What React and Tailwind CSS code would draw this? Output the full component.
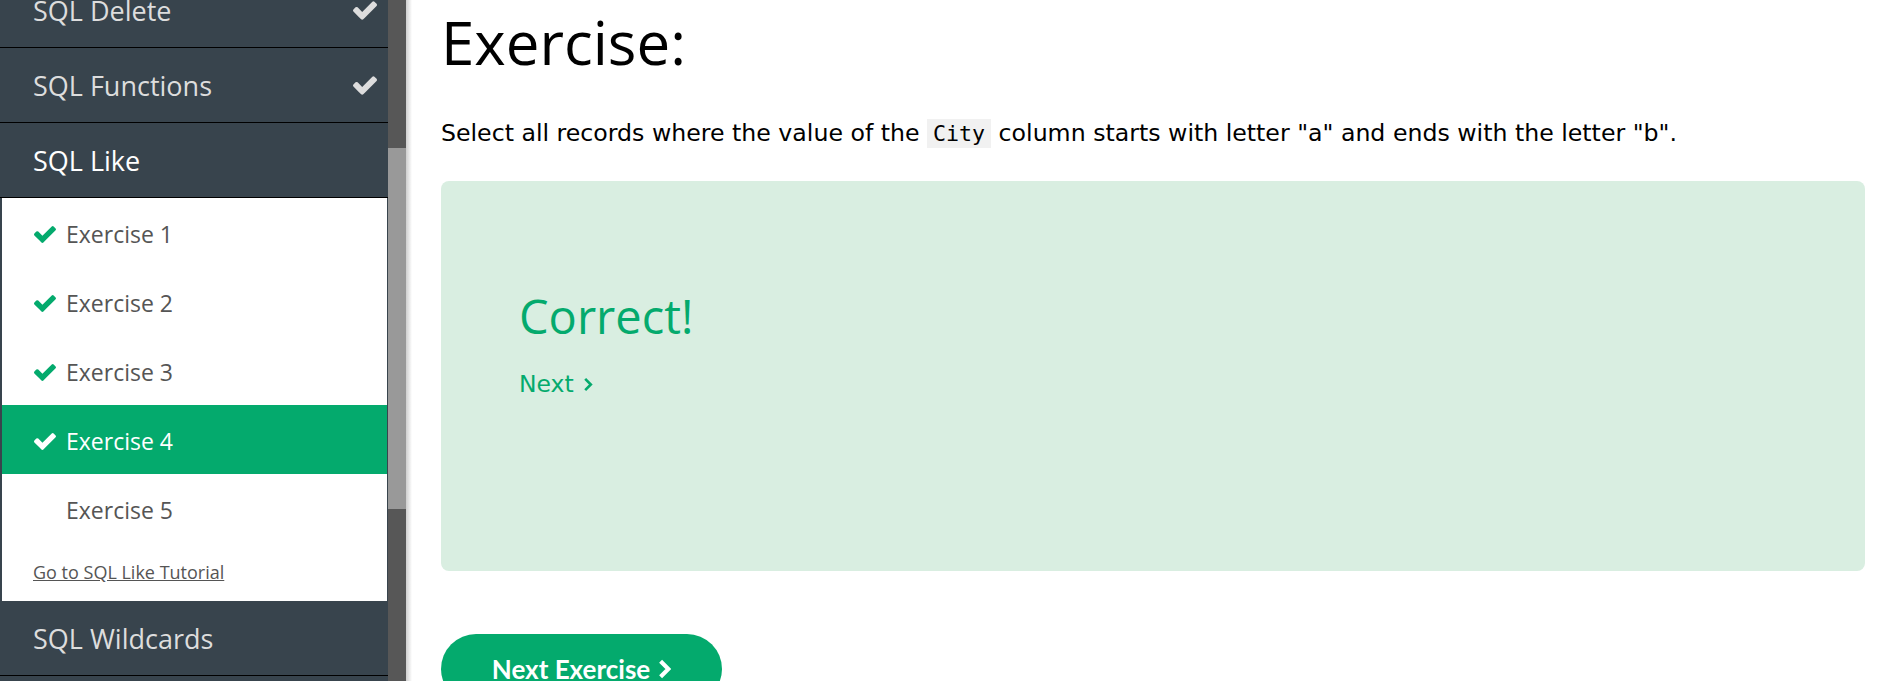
import React from "react";

const CHECK_PATH =
  "M1671 566q0 40-28 68l-724 724-136 136q-28 28-68 28t-68-28l-136-136-362-362q-28-28-28-68t28-68l136-136q28-28 68-28t68 28l294 295 656-657q28-28 68-28t68 28l136 136q28 28 28 68z";

const Check = ({ className }) => (
  <svg viewBox="121 334 1550 1188" className={className} fill="currentColor">
    <path d={CHECK_PATH} />
  </svg>
);

const Chevron = ({ className, width = 2.6 }) => (
  <svg viewBox="0 0 10 16" className={className} fill="none" stroke="currentColor" strokeWidth={width}>
    <path d="M2 2 L8 8 L2 14" />
  </svg>
);

const TopicRow = ({ label, done, active }) => (
  <div className="h-[75px] border-b border-black flex items-center justify-between pl-[33px] pr-[11px]">
    <span className={`text-[27px] leading-none ${active ? "text-white" : "text-[#dddddd]"}`}>{label}</span>
    {done && <Check className="w-[24px] h-[19px] text-[#dddddd]" />}
  </div>
);

const exercises = [
  { n: 1, done: true },
  { n: 2, done: true },
  { n: 3, done: true },
  { n: 4, done: true, current: true },
  { n: 5, done: false },
];

export default function App() {
  return (
    <div className="flex h-[681px] w-full overflow-hidden bg-white font-['Open_Sans',sans-serif]">
      {/* Sidebar */}
      <aside className="flex h-full shrink-0">
        <nav className="w-[388px] h-full bg-[#38444d] overflow-hidden">
          <div className="-mt-[27px]">
            <TopicRow label="SQL Delete" done />
            <TopicRow label="SQL Functions" done />
            <TopicRow label="SQL Like" active />

            <div className="bg-white ml-[2px] mr-[1px]">
              {exercises.map((ex) => (
                <div
                  key={ex.n}
                  className={`h-[69px] flex items-center pl-[32px] pt-[4px] gap-[10px] ${
                    ex.current ? "bg-[#04aa6d] text-white" : "text-[#555555]"
                  }`}
                >
                  {ex.done ? (
                    <Check className={`w-[22px] h-[17px] ${ex.current ? "text-white" : "text-[#04aa6d]"}`} />
                  ) : (
                    <span className="w-[22px]" />
                  )}
                  <span className="text-[23px] leading-none">Exercise {ex.n}</span>
                </div>
              ))}
              <div className="h-[58px] flex items-center pl-[31px]">
                <a href="#" className="text-[18px] leading-none text-[#555555] underline">
                  Go to SQL Like Tutorial
                </a>
              </div>
            </div>

            <TopicRow label="SQL Wildcards" />
          </div>
        </nav>
        {/* scrollbar */}
        <div className="w-[18px] h-full bg-[#575757] flex flex-col">
          <div className="h-[148px]" />
          <div className="h-[361px] bg-[#999999]" />
        </div>
        <div className="w-[6px] h-full bg-linear-to-r from-[#cfcfcf] to-white" />
      </aside>

      {/* Main */}
      <main className="flex-1 pl-[29px] pr-[23px]">
        <h1 className="mt-[12px] text-[60px] leading-none text-black font-normal">Exercise:</h1>

        <p className="mt-[45px] font-['DejaVu_Sans',sans-serif] text-[23.65px] leading-[32px] text-black">
          Select all records where the value of the{" "}
          <code className="font-['DejaVu_Sans_Mono',monospace] text-[21.6px] bg-[#f1f1f1] px-[6px] py-[2px]">City</code>{" "}
          column starts with letter "a" and ends with the letter "b".
        </p>

        <div className="mt-[31px] h-[390px] rounded-[8px] bg-[#d9eee1] pl-[78px] pt-[112px]">
          <h2 className="text-[47px] leading-none text-[#04aa6d] font-normal">Correct!</h2>
          <a
            href="#"
            className="mt-[28px] flex items-center gap-[9px] font-['DejaVu_Sans',sans-serif] text-[23.5px] leading-[32px] text-[#04aa6d]"
          >
            Next
            <Chevron className="w-[10px] h-[15px]" width={2.8} />
          </a>
        </div>

        <button className="mt-[63px] w-[281px] rounded-full bg-[#04aa6d] py-[22px] flex items-center justify-center gap-[8px] font-['Lato',sans-serif] font-bold text-[26px] leading-none text-white">
          Next Exercise
          <Chevron className="w-[13px] h-[22px]" width={3.2} />
        </button>
      </main>
    </div>
  );
}
